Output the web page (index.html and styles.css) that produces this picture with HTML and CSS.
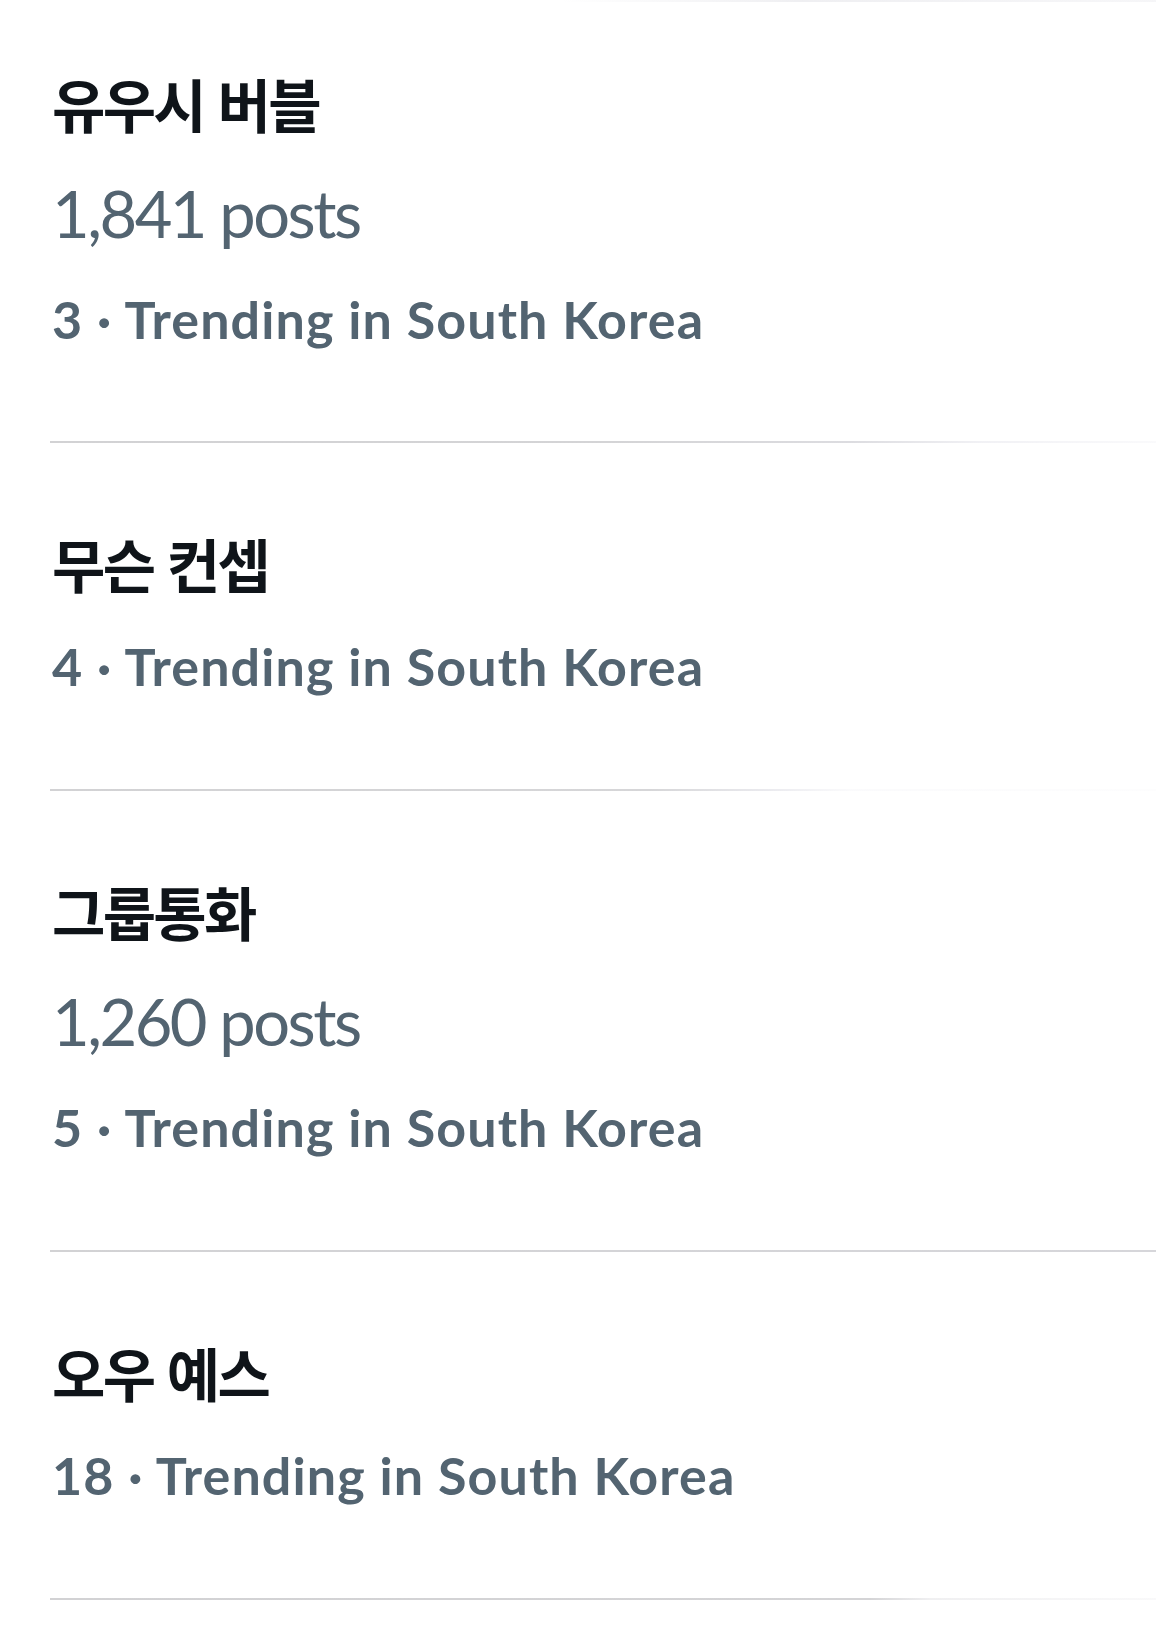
FILE: index.html
```html
<!DOCTYPE html>
<html lang="ko">
<head>
<meta charset="utf-8">
<title>Trending in South Korea</title>
<link rel="stylesheet" href="styles.css">
</head>
<body>
<main class="trends">
  <section class="trend divider-fade-a">
    <div class="trend-title">유우시 버블</div>
    <div class="trend-posts">1,841 posts</div>
    <div class="trend-meta">3 · Trending in South Korea</div>
  </section>
  <section class="trend divider-fade-b">
    <div class="trend-title">무슨 컨셉</div>
    <div class="trend-meta">4 · Trending in South Korea</div>
  </section>
  <section class="trend divider-full">
    <div class="trend-title">그룹통화</div>
    <div class="trend-posts">1,260 posts</div>
    <div class="trend-meta">5 · Trending in South Korea</div>
  </section>
  <section class="trend divider-fade-c">
    <div class="trend-title">오우 예스</div>
    <div class="trend-meta">18 · Trending in South Korea</div>
  </section>
</main>
</body>
</html>
```
FILE: styles.css
```css
html, body {
  margin: 0;
  padding: 0;
  background: #ffffff;
}

body {
  width: 1156px;
  height: 1630px;
  overflow: hidden;
}

.trends {
  display: flex;
  flex-direction: column;
  padding-left: 50px;
  background: linear-gradient(90deg, rgba(230,230,234,0) 0px, rgba(230,230,234,0) 560px, rgba(232,232,236,0.7) 800px, rgba(236,236,240,0.5) 1106px) top / 100% 2px no-repeat;
}

.trend {
  display: flex;
  flex-direction: column;
  padding: 85px 0 94px 2px;
  background-repeat: no-repeat;
  background-position: left bottom;
  background-size: 100% 2px;
}

.trend:first-child {
  padding-top: 68px;
  padding-bottom: 93px;
}

.divider-fade-a {
  background-image: linear-gradient(90deg, #d2d2d4 0px, #d4d4d6 560px, #dcdce0 800px, rgba(232,232,238,0.6) 930px, rgba(240,240,245,0.35) 1106px);
}

.divider-fade-b {
  background-image: linear-gradient(90deg, #d2d2d4 0px, #d6d6d8 600px, rgba(226,226,232,0.7) 720px, rgba(240,240,245,0.3) 800px, rgba(245,245,248,0.2) 1106px);
}

.divider-full {
  background-image: linear-gradient(90deg, #d2d2d4, #d6d6da);
}

.divider-fade-c {
  background-image: linear-gradient(90deg, #d2d2d4 0px, #d4d4d6 820px, rgba(225,225,228,0.5) 880px, rgba(235,235,238,0.3) 1106px);
}

.trend-title {
  font-family: "Noto Sans CJK KR", "Noto Sans", sans-serif;
  font-weight: 700;
  font-size: 58px;
  line-height: 70px;
  color: #0f1419;
  letter-spacing: -2.7px;
}

.trend-posts {
  margin-top: 37px;
  font-family: Lato, "Noto Sans", sans-serif;
  font-weight: 400;
  font-size: 65px;
  line-height: 76px;
  color: #536471;
  letter-spacing: -2.5px;
}

.trend-meta {
  margin-top: 37px;
  font-family: Lato, "Noto Sans", sans-serif;
  font-weight: 700;
  font-size: 52px;
  line-height: 62px;
  color: #536471;
  letter-spacing: 1.1px;
}
```
